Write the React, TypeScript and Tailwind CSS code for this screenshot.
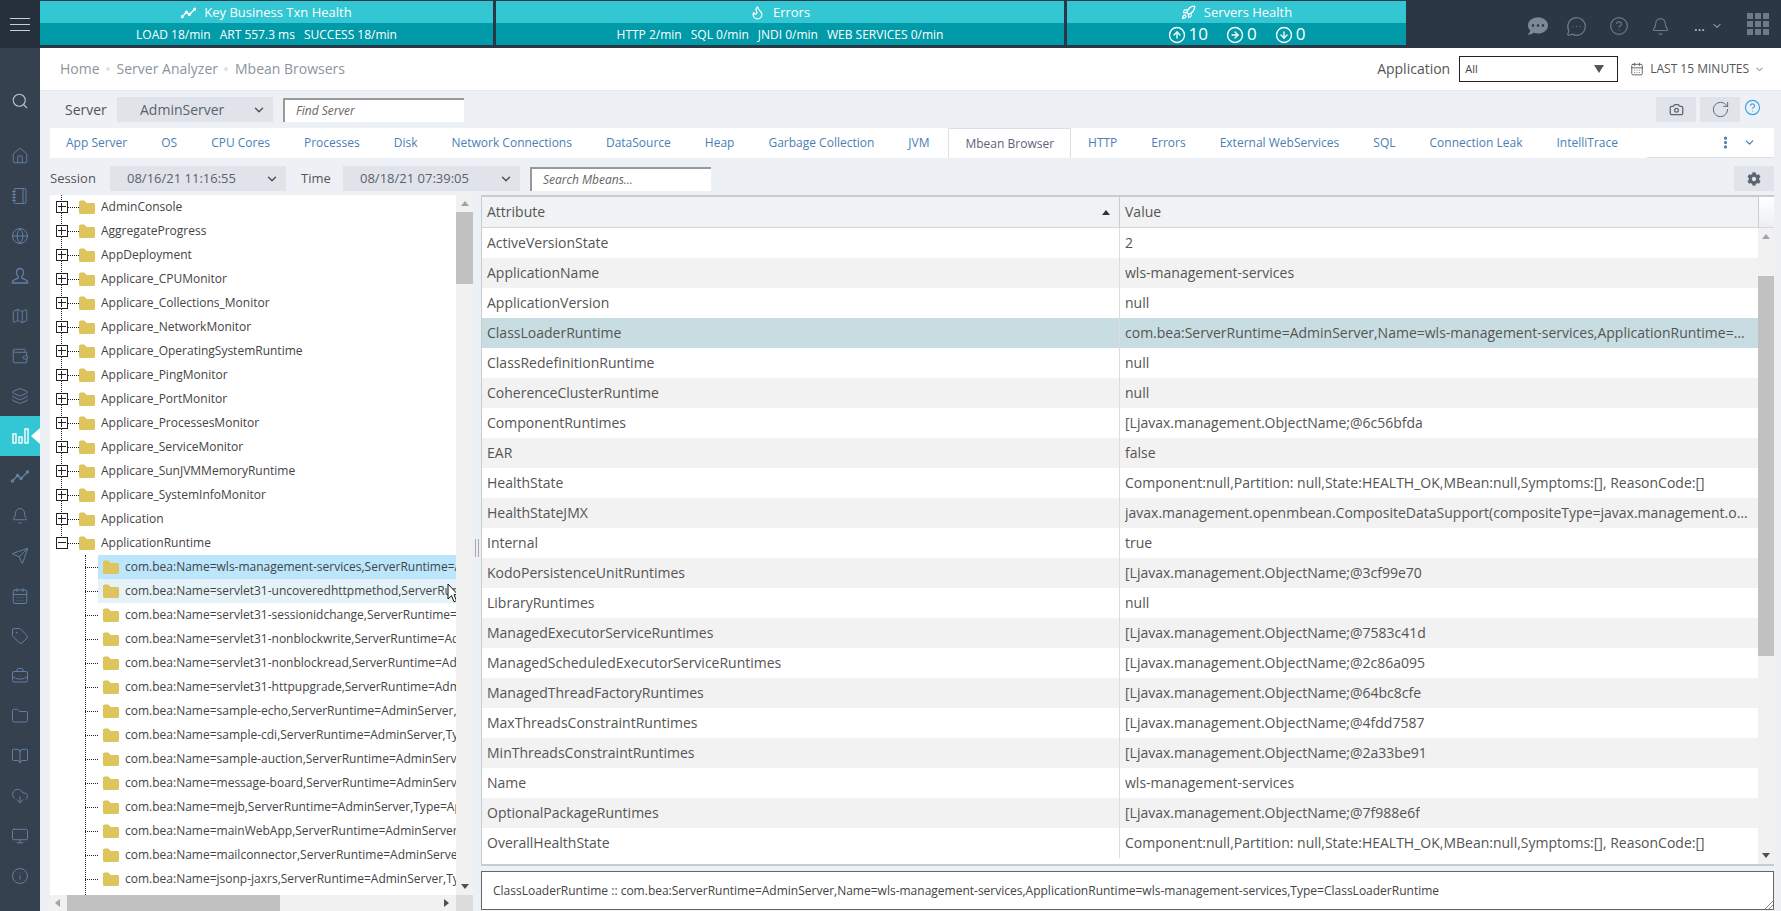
import {
  Search, Home, Notebook, Globe, Map, Wallet, Layers, Bell, Send, CalendarDays, Tag, BriefcaseBusiness,
  Folder, BookOpen, CloudDownload, Monitor, Info, Flame, Rocket, CircleArrowUp, CircleArrowRight,
  CircleArrowDown, MessageCircleMore, CircleHelp, ChevronDown, Camera, RotateCw, EllipsisVertical,
} from "lucide-react";
import { FaCog, FaCommentDots } from "react-icons/fa";

const TrendIcon = ({ size = 18, width = 1.4 }: { size?: number; width?: number }) => (
  <svg width={size} height={size} viewBox="0 0 18 18" fill="none" stroke="currentColor" strokeWidth={width}>
    <path d="M1.500 14 6.500 8.500l3.500 3L16.500 5" />
    <circle cx="1.500" cy="14" r="1" fill="currentColor" />
    <circle cx="6.500" cy="8.500" r="1" fill="currentColor" />
    <circle cx="10" cy="11.500" r="1" fill="currentColor" />
    <circle cx="16.500" cy="5" r="1" fill="currentColor" />
  </svg>
);

const BustIcon = ({ size = 18, strokeWidth = 1.3 }: { size?: number; strokeWidth?: number }) => (
  <svg width={size} height={size} viewBox="0 0 18 18" fill="none" stroke="currentColor" strokeWidth={strokeWidth}>
    <path d="M9 1.500c-2.200 0-3.500 1.700-3.500 4 0 1.800.8 3.200 1.700 4.100v1.600c-1.800.9-5.200 1.700-5.700 3.300v1.500h15v-1.500c-.5-1.600-3.900-2.400-5.700-3.300V9.600c.9-.9 1.700-2.300 1.700-4.100 0-2.300-1.300-4-3.500-4z" />
  </svg>
);

const sideIcons = [Home, Notebook, Globe, BustIcon, Map, Wallet, Layers, "chart", TrendIcon, Bell, Send, CalendarDays, Tag, BriefcaseBusiness, Folder, BookOpen, CloudDownload, Monitor, Info];

const tabs = ["App Server", "OS", "CPU Cores", "Processes", "Disk", "Network Connections", "DataSource", "Heap", "Garbage Collection", "JVM", "Mbean Browser", "HTTP", "Errors", "External WebServices", "SQL", "Connection Leak", "IntelliTrace"];

const roots = ["AdminConsole", "AggregateProgress", "AppDeployment", "Applicare_CPUMonitor", "Applicare_Collections_Monitor", "Applicare_NetworkMonitor", "Applicare_OperatingSystemRuntime", "Applicare_PingMonitor", "Applicare_PortMonitor", "Applicare_ProcessesMonitor", "Applicare_ServiceMonitor", "Applicare_SunJVMMemoryRuntime", "Applicare_SystemInfoMonitor", "Application", "ApplicationRuntime"];

const children = ["wls-management-services", "servlet31-uncoveredhttpmethod", "servlet31-sessionidchange", "servlet31-nonblockwrite", "servlet31-nonblockread", "servlet31-httpupgrade", "sample-echo", "sample-cdi", "sample-auction", "message-board", "mejb", "mainWebApp", "mailconnector", "jsonp-jaxrs"];

const rows = [
  ["ActiveVersionState", "2"],
  ["ApplicationName", "wls-management-services"],
  ["ApplicationVersion", "null"],
  ["ClassLoaderRuntime", "com.bea:ServerRuntime=AdminServer,Name=wls-management-services,ApplicationRuntime=wls-management-services,Type=ClassLoaderRuntime"],
  ["ClassRedefinitionRuntime", "null"],
  ["CoherenceClusterRuntime", "null"],
  ["ComponentRuntimes", "[Ljavax.management.ObjectName;@6c56bfda"],
  ["EAR", "false"],
  ["HealthState", "Component:null,Partition: null,State:HEALTH_OK,MBean:null,Symptoms:[], ReasonCode:[]"],
  ["HealthStateJMX", "javax.management.openmbean.CompositeDataSupport(compositeType=javax.management.openmbean.CompositeType"],
  ["Internal", "true"],
  ["KodoPersistenceUnitRuntimes", "[Ljavax.management.ObjectName;@3cf99e70"],
  ["LibraryRuntimes", "null"],
  ["ManagedExecutorServiceRuntimes", "[Ljavax.management.ObjectName;@7583c41d"],
  ["ManagedScheduledExecutorServiceRuntimes", "[Ljavax.management.ObjectName;@2c86a095"],
  ["ManagedThreadFactoryRuntimes", "[Ljavax.management.ObjectName;@64bc8cfe"],
  ["MaxThreadsConstraintRuntimes", "[Ljavax.management.ObjectName;@4fdd7587"],
  ["MinThreadsConstraintRuntimes", "[Ljavax.management.ObjectName;@2a33be91"],
  ["Name", "wls-management-services"],
  ["OptionalPackageRuntimes", "[Ljavax.management.ObjectName;@7f988e6f"],
  ["OverallHealthState", "Component:null,Partition: null,State:HEALTH_OK,MBean:null,Symptoms:[], ReasonCode:[]"],
];

const FolderIcon = () => (
  <svg width="16" height="14" viewBox="0 0 16 14" className="shrink-0">
    <path d="M0 2a1.5 1.500 0 0 1 1.500-1.500h4L7.500 3h7A1.500 1.500 0 0 1 16 4.500v8a1.500 1.500 0 0 1-1.500 1.500h-13A1.500 1.500 0 0 1 0 12.500z" fill="#dec45c" />
  </svg>
);

const Expander = ({ open }: { open?: boolean }) => (
  <span className="relative w-3 h-3 shrink-0 bg-white border border-[#222]">
    <span className="absolute left-[1px] right-[1px] top-[4px] h-px bg-[#222]" />
    {!open && <span className="absolute top-[1px] bottom-[1px] left-[4px] w-px bg-[#222]" />}
  </span>
);

const Tile = ({ icon, title, wide, children: body }: any) => (
  <div className={`${wide} flex flex-col text-white`}>
    <div className="h-[22px] pt-px bg-[#33c6d3] flex items-center justify-center gap-2 text-[13px]">
      {icon}
      <span>{title}</span>
    </div>
    <div className="h-[22px] pt-px bg-[#009aa8] flex items-center justify-center text-xs">{body}</div>
  </div>
);

const SelectBox = ({ text, w, pad, size }: any) => (
  <div className={`${w} ${pad} ${size} h-[25px] bg-[#e0e4ea] text-[#5a626c] flex items-center justify-between pr-[7px] shrink-0`}>
    <span>{text}</span>
    <ChevronDown size={14} strokeWidth={2.6} className="text-[#555]" />
  </div>
);

export default function App() {
  return (
    <div className="w-screen h-screen overflow-hidden flex flex-col bg-[#edf0f4] text-[#444] font-['Open_Sans',sans-serif]">
      {/* Top bar */}
      <header className="h-12 shrink-0 bg-[#2a3744] flex">
        <div className="w-10 shrink-0 bg-[#262f3c] flex flex-col items-center justify-center gap-[5px]">
          <span className="w-[20px] h-px bg-[#c9ced4]" />
          <span className="w-[20px] h-px bg-[#c9ced4]" />
          <span className="w-[20px] h-px bg-[#c9ced4]" />
        </div>
        <div className="flex gap-[3px] pt-px">
          <Tile wide="w-[453px]" title="Key Business Txn Health" icon={<TrendIcon size={15} width={1.8} />}>
            <span className="flex gap-[9px]"><span>LOAD 18/min</span><span>ART 557.3 ms</span><span>SUCCESS 18/min</span></span>
          </Tile>
          <Tile wide="w-[568px]" title="Errors" icon={<Flame size={15} strokeWidth={2} />}>
            <span className="flex gap-[9px]"><span>HTTP 2/min</span><span>SQL 0/min</span><span>JNDI 0/min</span><span>WEB SERVICES 0/min</span></span>
          </Tile>
          <Tile wide="w-[339px]" title="Servers Health" icon={<Rocket size={15} strokeWidth={2} />}>
            <span className="flex gap-[18px] text-[17px] items-center">
              <span className="flex items-center gap-[3px]"><CircleArrowUp size={18} strokeWidth={1.8} />10</span>
              <span className="flex items-center gap-[3px]"><CircleArrowRight size={18} strokeWidth={1.8} />0</span>
              <span className="flex items-center gap-[3px]"><CircleArrowDown size={18} strokeWidth={1.8} />0</span>
            </span>
          </Tile>
        </div>
        <div className="flex-1 flex items-center justify-end pr-[12px] pt-1 text-[#6d7a89]">
          <FaCommentDots size={20} className="mr-[18px] text-[#7b8896]" />
          <MessageCircleMore size={21} strokeWidth={1.4} className="mr-[22px]" />
          <CircleHelp size={20} strokeWidth={1.4} className="mr-[22px]" />
          <Bell size={19} strokeWidth={1.4} className="mr-[24px]" />
          <span className="text-sm text-[#c9ced4] mr-[6px] leading-none">...</span>
          <ChevronDown size={12} strokeWidth={2} className="text-[#c9ced4] mr-[24px]" />
          <div className="grid grid-cols-3 gap-[2px] mb-1">
            {Array.from({ length: 9 }).map((_, i) => (
              <span key={i} className="w-[6px] h-[6px] bg-[#6d7a89]" />
            ))}
          </div>
        </div>
      </header>

      <div className="flex-1 min-h-0 flex">
        {/* Sidebar */}
        <aside className="w-10 shrink-0 bg-[#36414f] flex flex-col pt-[33px] text-[#6480a3]">
          <div className="h-10 mb-[15px] flex items-center justify-center text-[#b9c2cc]">
            <Search size={18} strokeWidth={1.5} />
          </div>
          {sideIcons.map((Icon: any, i) =>
            Icon === "chart" ? (
              <div key={i} className="relative h-10 shrink-0 bg-[#33c6d3] flex items-center justify-center">
                <svg width="17" height="16" viewBox="0 0 17 16" fill="none" stroke="#fff" strokeWidth="1.4">
                  <rect x="1" y="6" width="3" height="9" />
                  <rect x="7" y="9" width="3" height="6" />
                  <rect x="13" y="1" width="3" height="14" />
                </svg>
                <span className="absolute right-0 top-[12px] border-y-[8px] border-y-transparent border-r-[9px] border-r-white" />
              </div>
            ) : (
              <div key={i} className="h-10 shrink-0 flex items-center justify-center">
                <Icon size={18} strokeWidth={1.3} />
              </div>
            )
          )}
        </aside>

        <main className="flex-1 min-w-0 flex flex-col">
          {/* Breadcrumb */}
          <div className="h-[43px] shrink-0 bg-white border-b border-[#e6e8eb] flex items-center pl-5 pr-[16px]">
            <div className="flex items-center gap-[6.500px] text-sm text-[#8b949e]">
              <span>Home</span>
              <span className="w-1 h-1 rounded-full bg-[#dfe2e6]" />
              <span>Server Analyzer</span>
              <span className="w-1 h-1 rounded-full bg-[#dfe2e6]" />
              <span>Mbean Browsers</span>
            </div>
            <div className="ml-auto flex items-center">
              <span className="text-sm text-[#555] mr-[9px]">Application</span>
              <div className="w-[159px] h-[26px] border border-[#222] bg-white flex items-center justify-between px-[5px] text-[11px] mr-[12px]">
                <span>All</span>
                <span className="mr-[8px] border-x-[5px] border-x-transparent border-t-[8px] border-t-[#555]" />
              </div>
              <CalendarDays size={14} strokeWidth={1.5} className="mr-[6px] text-[#555]" />
              <span className="text-xs text-[#555] mr-[5px]">LAST 15 MINUTES</span>
              <ChevronDown size={11} className="text-[#666]" />
            </div>
          </div>

          {/* Server row */}
          <div className="pl-[10px] pr-[7px] pt-[6px] flex flex-col flex-1 min-h-0">
            <div className="h-[25px] shrink-0 flex items-center">
              <span className="text-sm text-[#555] ml-[15px] mr-[10px] w-[42px]">Server</span>
              <SelectBox text="AdminServer" w="w-[156px]" pad="pl-[23px]" size="text-sm" />
              <div className="ml-[10px] w-[181px] h-[24px] bg-white border-t-2 border-l-2 border-[#999] italic text-xs text-[#666] flex items-center pl-[11px]">Find Server</div>
              <div className="ml-auto flex items-center">
                <div className="w-10 h-[25px] bg-[#e0e4ea] flex items-center justify-center text-[#5b6570]"><Camera size={15} strokeWidth={2} /></div>
                <div className="ml-1 w-10 h-[25px] bg-[#e0e4ea] flex items-center justify-center text-[#5b6570]"><RotateCw size={19} strokeWidth={1.2} /></div>
                <CircleHelp size={17} strokeWidth={1.6} className="ml-[4px] mr-[13px] mb-[4px] text-[#3ba0e6]" />
              </div>
            </div>

            {/* Tabs */}
            <div className="mt-[6px] h-[30px] shrink-0 bg-white flex items-stretch pl-px text-xs text-[#4a80b4]">
              {tabs.map((t) =>
                t === "Mbean Browser" ? (
                  <div key={t} className="ml-[2px] px-[16px] flex items-center border-x border-t border-[#dcdfe3] text-[#5f5f78]">{t}</div>
                ) : (
                  <div key={t} className="px-[17px] first:pl-[15px] flex items-center">{t}</div>
                )
              )}
              <div className="flex-1 border-b border-[#dcdfe3] ml-[12px] flex items-center justify-end pr-[18px] gap-[6px]">
                <EllipsisVertical size={15} strokeWidth={3} className="text-[#3f76ad]" />
                <ChevronDown size={13} className="text-[#3f76ad] ml-1" />
              </div>
            </div>

            {/* Session row */}
            <div className="mt-[8px] h-[25px] shrink-0 flex items-center">
              <span className="text-[13px] text-[#555] w-[60px]">Session</span>
              <SelectBox text="08/16/21 11:16:55" w="w-[176px]" pad="pl-[17px]" size="text-[13px]" />
              <span className="text-[13px] text-[#555] ml-[15px] w-[42px]">Time</span>
              <SelectBox text="08/18/21 07:39:05" w="w-[177px]" pad="pl-[17px]" size="text-[13px]" />
              <div className="ml-[10px] w-[181px] h-[24px] bg-white border-t-2 border-l-2 border-[#999] italic text-xs text-[#666] flex items-center pl-[11px]">Search Mbeans...</div>
              <div className="ml-auto w-10 h-[25px] bg-[#e0e4ea] flex items-center justify-center text-[#5b6570]"><FaCog size={14} /></div>
            </div>

            {/* Content */}
            <div className="mt-1 flex-1 min-h-0 flex">
              {/* Tree */}
              <div className="w-[423px] shrink-0 flex flex-col">
                <div className="flex-1 min-h-0 flex">
                  <div className="relative w-[406px] bg-white overflow-hidden text-xs text-[#444] whitespace-nowrap">
                    <span className="absolute left-[11px] top-0 h-[349px] border-l border-dotted border-[#222]" />
                    {roots.map((r, i) => (
                      <div key={r} className="relative h-6 flex items-center pl-[6px]">
                        <Expander open={i === roots.length - 1} />
                        <span className="w-[11px] border-t border-dotted border-[#222] shrink-0" />
                        <FolderIcon />
                        <span className="ml-[6px]">{r}</span>
                      </div>
                    ))}
                    <span className="absolute left-[35px] top-[360px] h-[340px] border-l border-dotted border-[#222]" />
                    {children.map((c, i) => (
                      <div key={c} className="relative h-6 flex items-center">
                        <span className="ml-[35px] w-[13px] border-t border-dotted border-[#222] shrink-0" />
                        <div className={`flex-1 h-6 flex items-center pl-[5px] ${i === 0 ? "bg-[#bbe6fb]" : i === 1 ? "bg-[#e5f3f9]" : ""}`}>
                          <FolderIcon />
                          <span className="ml-[6px]">com.bea:Name={c},ServerRuntime=AdminServer,Type=ApplicationRuntime</span>
                        </div>
                      </div>
                    ))}
                    {/* mouse pointer */}
                    <svg width="12" height="20" viewBox="0 0 12 20" className="absolute left-[397px] top-[388px]">
                      <path d="M1 1v15l3.500-3.300 2.500 6 2.500-1-2.500-6H11z" fill="#fff" stroke="#111" strokeWidth="1" />
                    </svg>
                  </div>
                  <div className="w-[17px] shrink-0 bg-[#f1f1f1] flex flex-col items-center">
                    <span className="mt-[6px] border-x-[4px] border-x-transparent border-b-[5px] border-b-[#a3a3a3]" />
                    <span className="mt-[6px] w-full h-[72px] bg-[#c1c1c1]" />
                    <span className="mt-auto mb-[6px] border-x-[4px] border-x-transparent border-t-[5px] border-t-[#505050]" />
                  </div>
                </div>
                <div className="h-4 shrink-0 flex">
                  <div className="w-[406px] bg-[#f1f1f1] flex items-center">
                    <span className="ml-[5px] border-y-[4px] border-y-transparent border-r-[5px] border-r-[#a3a3a3]" />
                    <span className="ml-[7px] w-[213px] h-4 bg-[#c1c1c1]" />
                    <span className="ml-auto mr-[7px] border-y-[4px] border-y-transparent border-l-[5px] border-l-[#505050]" />
                  </div>
                  <div className="flex-1 bg-[#dcdcdc]" />
                </div>
              </div>

              {/* Splitter */}
              <div className="w-2 shrink-0 flex items-center justify-center pb-[10px]">
                <span className="w-1 h-[18px] border-x border-[#a8a8a8]" />
              </div>

              {/* Table */}
              <div className="flex-1 min-w-0 flex flex-col">
                <div className="h-[671px] shrink-0 flex flex-col border-l border-t-2 border-[#c9cccf] border-b-2 bg-white">
                  <div className="h-[31px] shrink-0 flex bg-[#f0f2f4] border-b border-[#d5d7da] text-sm text-[#555]">
                    <div className="w-[638px] shrink-0 flex items-center justify-between pl-[5px] pr-[9px] border-r border-[#ccc]">
                      <span>Attribute</span>
                      <span className="border-x-[4px] border-x-transparent border-b-[5px] border-b-[#333]" />
                    </div>
                    <div className="flex-1 flex items-center pl-[5px]">Value</div>
                    <div className="w-4 border-l border-[#ccc] bg-gradient-to-b from-white to-[#eceff2]" />
                  </div>
                  <div className="flex-1 min-h-0 flex">
                    <div className="flex-1 min-w-0 overflow-hidden text-sm text-[#555]">
                      {rows.map(([k, v], i) => (
                        <div key={k} className={`h-[30px] flex items-center ${i === 3 ? "bg-[#c8dde1]" : i % 2 === 1 ? "bg-[#f2f2f2]" : "bg-white"}`}>
                          <div className="w-[638px] shrink-0 h-full flex items-center pl-[5px] border-r border-[#ddd] truncate">{k}</div>
                          <div className="flex-1 min-w-0 h-full flex items-center pl-[5px] pr-[10px]">
                            <span className="truncate">{v}</span>
                          </div>
                        </div>
                      ))}
                    </div>
                    <div className="w-4 shrink-0 bg-[#f1f1f1] flex flex-col items-center">
                      <span className="mt-[6px] border-x-[4px] border-x-transparent border-b-[5px] border-b-[#a3a3a3]" />
                      <span className="mt-[37px] w-full h-[380px] bg-[#c1c1c1]" />
                      <span className="mt-auto mb-[6px] border-x-[4px] border-x-transparent border-t-[5px] border-t-[#505050]" />
                    </div>
                  </div>
                </div>
                <div className="relative mt-[5px] h-[39px] shrink-0 bg-white border border-[#666] flex items-center pl-[11px] text-xs text-[#444] whitespace-nowrap overflow-hidden">
                  ClassLoaderRuntime :: com.bea:ServerRuntime=AdminServer,Name=wls-management-services,ApplicationRuntime=wls-management-services,Type=ClassLoaderRuntime
                  <svg width="8" height="8" viewBox="0 0 8 8" className="absolute right-0 bottom-0" stroke="#888" strokeWidth="1">
                    <path d="M0 8 8 0M4 8l4-4" />
                  </svg>
                </div>
              </div>
            </div>
          </div>
        </main>
      </div>
    </div>
  );
}
